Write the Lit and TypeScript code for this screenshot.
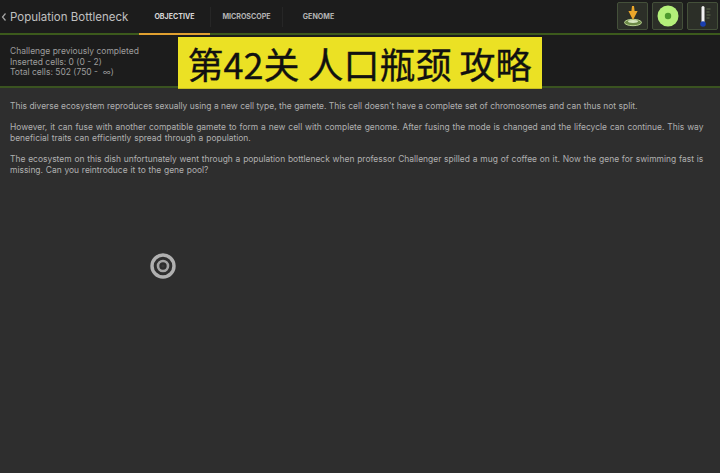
import { LitElement, html, css } from "lit";
import { customElement } from "lit/decorators.js";

@customElement("app-root")
export class AppRoot extends LitElement {
  static styles = css`
    :host { display: block; width: 720px; height: 473px; background: #2e2e2e; position: relative; overflow: hidden;
      font-family: Inter, "Noto Sans", sans-serif; color: #b5b5b5; }
    .top { height: 33px; background: #1c1c1c; display: flex; align-items: center; border-bottom: 2px solid #3c5a1c; position: relative; }
    .back { width: 8px; margin-left: 0; display: flex; }
    .title { font-size: 11.5px; color: #c0c0c0; margin-left: 2px; width: 129px; white-space: nowrap; }
    .tabs { display: flex; height: 33px; }
    .tab { width: 71px; font-size: 7.1px; font-weight: 700; color: #b4b4b4; display: flex; align-items: center; justify-content: center; position: relative; }
    .tab.on { color: #d8d8d8; }
    .tab.on::after { content: ""; position: absolute; left: 0; right: 0; bottom: -2px; height: 2px; background: #e0a030; }
    .sep { width: 1px; height: 20px; background: #262626; align-self: center; }
    .tools { margin-left: auto; display: flex; gap: 4px; margin-right: 2px; margin-top: -1px; }
    .tool { width: 31px; height: 28px; box-sizing: border-box; background: #2c2f28; border: 1px solid #44503a; border-radius: 2px; display: flex; align-items: center; justify-content: center; }
    .info { height: 53px; background: #1c1c1c; border-bottom: 2px solid #3a5320; box-sizing: border-box; padding: 11px 10px 0; font-size: 8.5px; line-height: 10.5px; color: #9c9c9c; }
    .info div { white-space: pre; }
    .banner { position: absolute; left: 178px; top: 37px; width: 363px; height: 51px; background: #ebe124; color: #111; padding-right: 1px;
      font-family: "Noto Sans CJK SC", sans-serif; font-weight: 400; -webkit-text-stroke: .35px #111; font-size: 36px; line-height: 52px; text-align: center; white-space: nowrap; border-bottom: 1px solid #c8c020; }
    .body { padding: 13px 10px 0; font-size: 8.45px; line-height: 10.7px; color: #b0b0b0; }
    .body p { margin: 0 0 10.5px; }
    .body p:nth-child(1) { word-spacing: .07px; }
    .body p:nth-child(2) { word-spacing: .55px; }
    .body p:nth-child(3) { word-spacing: .42px; }
    .target { position: absolute; left: 149px; top: 252px; display: block; }
  `;

  render() {
    return html`
      <div class="top">
        <span class="back"><svg width="8" height="12" viewBox="0 0 8 12"><path d="M5.5 2.5 L2.5 6 L5.5 9.5" fill="none" stroke="#a8a8a8" stroke-width="1.2"/></svg></span>
        <span class="title">Population Bottleneck</span>
        <div class="tabs">
          <div class="tab on">OBJECTIVE</div>
          <div class="sep"></div>
          <div class="tab">MICROSCOPE</div>
          <div class="sep"></div>
          <div class="tab">GENOME</div>
        </div>
        <div class="tools">
          <div class="tool">
            <svg width="24" height="24" viewBox="0 0 24 24">
              <ellipse cx="12" cy="18.5" rx="8.5" ry="3.2" fill="#6d8a48" stroke="#b8d090" stroke-width="1"/>
              <ellipse cx="12" cy="17.5" rx="5" ry="1.4" fill="#d8e8c0"/>
              <path d="M11 2 h2 l.6 5 h3 l-4.6 9 -4.6 -9 h3z" fill="#eaa62a"/>
            </svg>
          </div>
          <div class="tool">
            <svg width="24" height="24" viewBox="0 0 24 24">
              <circle cx="12" cy="12" r="10.5" fill="#b4f07a"/>
              <circle cx="12" cy="12" r="3.2" fill="#4d9a2e"/>
            </svg>
          </div>
          <div class="tool">
            <svg width="24" height="26" viewBox="0 0 24 26">
              <rect x="10.5" y="3" width="3" height="17" rx="1.5" fill="#f2f2f2"/>
              <circle cx="12" cy="21" r="2.8" fill="#1a3fb0"/>
              <path d="M15.5 6h4M15.5 9h3M15.5 12h4M15.5 15h3" stroke="#5c6a4c" stroke-width="1"/>
            </svg>
          </div>
        </div>
      </div>
      <div class="info">
        <div>Challenge previously completed</div>
        <div>Inserted cells: 0 (0 - 2)</div>
        <div>Total cells: 502 (750 -  ∞)</div>
      </div>
      <div class="banner">第42关 人口瓶颈 攻略</div>
      <div class="body">
        <p>This diverse ecosystem reproduces sexually using a new cell type, the gamete. This cell doesn't have a complete set of chromosomes and can thus not split.</p>
        <p>However, it can fuse with another compatible gamete to form a new cell with complete genome. After fusing the mode is changed and the lifecycle can continue. This way beneficial traits can efficiently spread through a population.</p>
        <p>The ecosystem on this dish unfortunately went through a population bottleneck when professor Challenger spilled a mug of coffee on it. Now the gene for swimming fast is missing. Can you reintroduce it to the gene pool?</p>
      </div>
      <svg class="target" width="28" height="28" viewBox="0 0 28 28">
        <circle cx="14" cy="14" r="11" fill="none" stroke="#b0b0b0" stroke-width="3.4"/>
        <circle cx="14" cy="14" r="5" fill="none" stroke="#a4a4a4" stroke-width="2.6"/>
        <circle cx="14" cy="14" r="1.6" fill="#3a3a3a"/>
      </svg>
    `;
  }
}
